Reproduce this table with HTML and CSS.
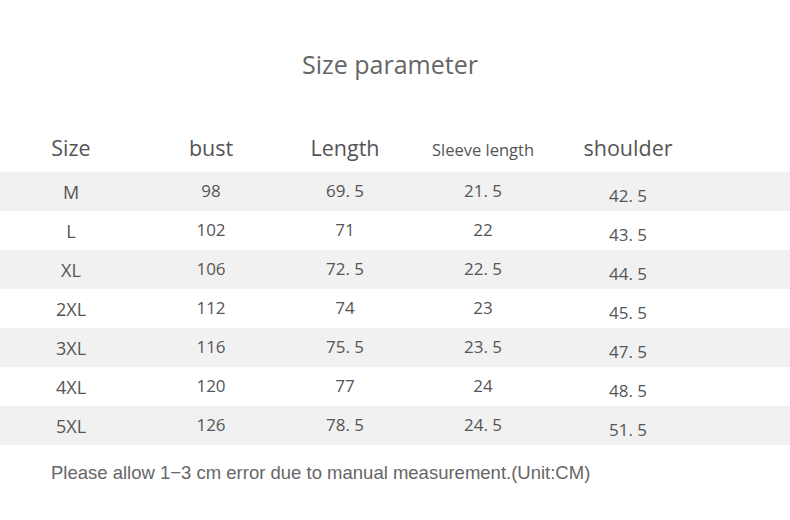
FILE: index.html
```html
<!DOCTYPE html>
<html>
<head>
<meta charset="utf-8">
<link rel="stylesheet" href="styles.css">
</head>
<body>
<div class="page">
  <h1 class="title">Size parameter</h1>
  <div class="table">
    <div class="row head">
      <div class="c">Size</div><div class="c">bust</div><div class="c">Length</div><div class="c small">Sleeve length</div><div class="c">shoulder</div>
    </div>
    <div class="row gray"><div class="c sz">M</div><div class="c">98</div><div class="c">69. 5</div><div class="c">21. 5</div><div class="c sh">42. 5</div></div>
    <div class="row"><div class="c sz">L</div><div class="c">102</div><div class="c">71</div><div class="c">22</div><div class="c sh">43. 5</div></div>
    <div class="row gray"><div class="c sz">XL</div><div class="c">106</div><div class="c">72. 5</div><div class="c">22. 5</div><div class="c sh">44. 5</div></div>
    <div class="row"><div class="c sz">2XL</div><div class="c">112</div><div class="c">74</div><div class="c">23</div><div class="c sh">45. 5</div></div>
    <div class="row gray"><div class="c sz">3XL</div><div class="c">116</div><div class="c">75. 5</div><div class="c">23. 5</div><div class="c sh">47. 5</div></div>
    <div class="row"><div class="c sz">4XL</div><div class="c">120</div><div class="c">77</div><div class="c">24</div><div class="c sh">48. 5</div></div>
    <div class="row gray"><div class="c sz">5XL</div><div class="c">126</div><div class="c">78. 5</div><div class="c">24. 5</div><div class="c sh">51. 5</div></div>
  </div>
  <p class="note">Please allow 1−3 cm error due to manual measurement.(Unit:CM)</p>
</div>
</body>
</html>
```
FILE: styles.css
```css
html, body {
  margin: 0;
  padding: 0;
  background: #fff;
}
.page {
  width: 790px;
  height: 520px;
  font-family: "Open Sans", "Noto Sans", sans-serif;
  color: #555;
}
.title {
  margin: 0;
  padding: 47px 10px 0 0;
  height: 40px;
  line-height: 34px;
  text-align: center;
  font-size: 25px;
  font-weight: 400;
  color: #666;
}
.table {
  margin-top: 45px;
}
.row {
  display: grid;
  grid-template-columns: 142px 138px 130px 146px 144px;
  height: 39px;
  align-items: center;
}
.row.head {
  height: 40px;
  align-items: start;
  color: #555;
}
.row.gray {
  background: #f1f1f1;
}
.c {
  text-align: center;
  font-size: 17px;
  line-height: 20px;
}
.head .c {
  font-size: 21.5px;
  line-height: 24px;
  padding: 4px 0 0;
}
.head .c.small {
  font-size: 16.5px;
  padding-top: 6px;
}
.c.sz {
  font-size: 18px;
  padding-top: 0;
}
.c.sh {
  padding-top: 8px;
}
.c:not(.sz):not(.sh) {
  padding-bottom: 2px;
}
.note {
  margin: 0;
  padding: 17px 0 0 51px;
  font-family: "Liberation Sans", Arial, sans-serif;
  font-size: 18.5px;
  color: #666;
}
```
